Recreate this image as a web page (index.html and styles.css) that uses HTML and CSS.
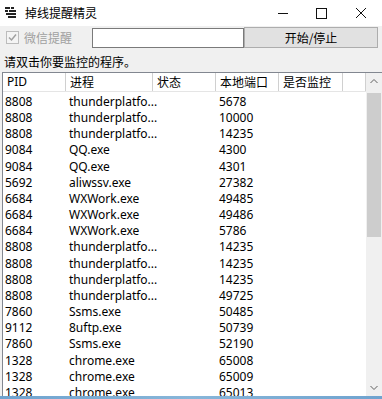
FILE: index.html
```html
<!DOCTYPE html>
<html lang="zh-CN">
<head>
<meta charset="UTF-8">
<title>掉线提醒精灵</title>
<link rel="stylesheet" href="styles.css">
</head>
<body>
<div class="window">
    <div class="titlebar">
        <svg class="app-icon" width="12" height="11" viewBox="0 0 12 11">
            <rect x="0" y="0" width="5" height="2" fill="#222"/>
            <rect x="6" y="0" width="3" height="2" fill="#222"/>
            <rect x="0" y="3" width="3" height="2" fill="#222"/>
            <rect x="4" y="3" width="7" height="2" fill="#222"/>
            <rect x="1" y="6" width="10" height="2" fill="#222"/>
            <rect x="3" y="9" width="8" height="2" fill="#222"/>
        </svg>
        <span class="title">掉线提醒精灵</span>
        <div class="controls">
            <svg width="46" height="26" viewBox="0 0 46 26"><line x1="26" y1="13.5" x2="36" y2="13.5" stroke="#111" stroke-width="1"/></svg>
            <svg width="40" height="26" viewBox="0 0 40 26"><rect x="18.5" y="8.5" width="10" height="10" fill="none" stroke="#111" stroke-width="1"/></svg>
            <svg width="46" height="26" viewBox="0 0 46 26"><path d="M18 8 L28 18 M28 8 L18 18" stroke="#111" stroke-width="1"/></svg>
        </div>
    </div>

    <div class="toolbar">
        <label class="check">
            <span class="box">
                <svg width="9" height="9" viewBox="0 0 9 9"><path d="M1 4.5 L3.5 7 L8 1.5" fill="none" stroke="#a0a0a0" stroke-width="1.5"/></svg>
            </span>
            微信提醒
        </label>
        <div class="textbox"></div>
        <div class="button">开始/停止</div>
    </div>

    <div class="hint">请双击你要监控的程序。</div>

    <div class="listview">
        <div class="list-main">
            <div class="header">
                <div class="col c1">PID</div>
                <div class="col c2">进程</div>
                <div class="col c3">状态</div>
                <div class="col c4">本地端口</div>
                <div class="col c5">是否监控</div>
                <div class="col c6"></div>
            </div>
            <div class="rows">
                <div class="row"><span class="c1">8808</span><span class="c2">thunderplatfo...</span><span class="c3"></span><span class="c4">5678</span></div>
                <div class="row"><span class="c1">8808</span><span class="c2">thunderplatfo...</span><span class="c3"></span><span class="c4">10000</span></div>
                <div class="row"><span class="c1">8808</span><span class="c2">thunderplatfo...</span><span class="c3"></span><span class="c4">14235</span></div>
                <div class="row"><span class="c1">9084</span><span class="c2">QQ.exe</span><span class="c3"></span><span class="c4">4300</span></div>
                <div class="row"><span class="c1">9084</span><span class="c2">QQ.exe</span><span class="c3"></span><span class="c4">4301</span></div>
                <div class="row"><span class="c1">5692</span><span class="c2">aliwssv.exe</span><span class="c3"></span><span class="c4">27382</span></div>
                <div class="row"><span class="c1">6684</span><span class="c2">WXWork.exe</span><span class="c3"></span><span class="c4">49485</span></div>
                <div class="row"><span class="c1">6684</span><span class="c2">WXWork.exe</span><span class="c3"></span><span class="c4">49486</span></div>
                <div class="row"><span class="c1">6684</span><span class="c2">WXWork.exe</span><span class="c3"></span><span class="c4">5786</span></div>
                <div class="row"><span class="c1">8808</span><span class="c2">thunderplatfo...</span><span class="c3"></span><span class="c4">14235</span></div>
                <div class="row"><span class="c1">8808</span><span class="c2">thunderplatfo...</span><span class="c3"></span><span class="c4">14235</span></div>
                <div class="row"><span class="c1">8808</span><span class="c2">thunderplatfo...</span><span class="c3"></span><span class="c4">14235</span></div>
                <div class="row"><span class="c1">8808</span><span class="c2">thunderplatfo...</span><span class="c3"></span><span class="c4">49725</span></div>
                <div class="row"><span class="c1">7860</span><span class="c2">Ssms.exe</span><span class="c3"></span><span class="c4">50485</span></div>
                <div class="row"><span class="c1">9112</span><span class="c2">8uftp.exe</span><span class="c3"></span><span class="c4">50739</span></div>
                <div class="row"><span class="c1">7860</span><span class="c2">Ssms.exe</span><span class="c3"></span><span class="c4">52190</span></div>
                <div class="row"><span class="c1">1328</span><span class="c2">chrome.exe</span><span class="c3"></span><span class="c4">65008</span></div>
                <div class="row"><span class="c1">1328</span><span class="c2">chrome.exe</span><span class="c3"></span><span class="c4">65009</span></div>
                <div class="row"><span class="c1">1328</span><span class="c2">chrome.exe</span><span class="c3"></span><span class="c4">65013</span></div>
            </div>
        </div>
        <div class="scrollbar">
            <svg class="arrow" width="16" height="17" viewBox="0 0 16 17"><path d="M4.5 10 L8 6.5 L11.5 10" fill="none" stroke="#606060" stroke-width="1"/></svg>
            <div class="track"><div class="thumb"></div></div>
            <svg class="arrow" width="16" height="17" viewBox="0 0 16 17"><path d="M4.5 7 L8 10.5 L11.5 7" fill="none" stroke="#606060" stroke-width="1"/></svg>
        </div>
    </div>
</div>
<div class="taskbar"></div>
</body>
</html>
```

FILE: styles.css
```css
body {
    margin: 0;
    width: 382px;
    height: 399px;
    overflow: hidden;
    background-color: #f0f0f0;
    font-family: "Noto Sans", "Noto Sans CJK SC", sans-serif;
    font-size: 12px;
    color: #000;
}

.window {
    height: 396px;
    display: flex;
    flex-direction: column;
    overflow: hidden;
}

.titlebar {
    height: 26px;
    background: #fff;
    display: flex;
    align-items: center;
    flex-shrink: 0;
}

.app-icon {
    margin-left: 5px;
    margin-top: -2px;
}

.title {
    margin-left: 8px;
    font-family: "Noto Sans CJK SC", sans-serif;
    font-size: 12px;
    margin-top: -2px;
}

.controls {
    margin-left: auto;
    display: flex;
    margin-right: -2px;
}

.controls svg {
    display: block;
}

.toolbar {
    display: flex;
    align-items: center;
    height: 21px;
    margin-top: 1px;
    flex-shrink: 0;
}

.check {
    display: flex;
    align-items: center;
    width: 86px;
    padding-left: 6px;
    color: #a0a0a0;
    font-family: "Noto Sans CJK SC", sans-serif;
    font-size: 12px;
}

.box {
    width: 13px;
    height: 13px;
    border: 1px solid #bcbcbc;
    background: #f4f4f4;
    display: flex;
    align-items: center;
    justify-content: center;
    margin-right: 5px;
    box-sizing: border-box;
}

.textbox {
    width: 152px;
    height: 20px;
    background: #fff;
    border: 1px solid #7a7a7a;
    box-sizing: border-box;
}

.button {
    width: 134px;
    height: 21px;
    background: #e1e1e1;
    border: 1px solid #adadad;
    box-sizing: border-box;
    display: flex;
    align-items: center;
    justify-content: center;
    font-family: "Noto Sans CJK SC", sans-serif;
}

.hint {
    margin-top: 6px;
    padding-left: 4px;
    height: 16px;
    line-height: 16px;
    font-family: "Noto Sans CJK SC", sans-serif;
    flex-shrink: 0;
}

.listview {
    margin-top: 2px;
    margin-left: 2px;
    flex: 1;
    display: flex;
    border: 1px solid #828790;
    border-right: none;
    border-bottom: none;
    background: #fff;
    overflow: hidden;
}

.list-main {
    flex: 1;
    overflow: hidden;
}

.header {
    display: flex;
    height: 18px;
    border-bottom: 1px solid #e5e5e5;
}

.header .col {
    box-sizing: border-box;
    padding-left: 4px;
    line-height: 18px;
    border-right: 1px solid #d0d0d0;
    flex-shrink: 0;
}

.c1 { width: 63px; }
.c2 { width: 87px; }
.c3 { width: 63px; }
.c4 { width: 63px; }
.c5 { width: 64px; }
.c6 { width: 23px; }

.header .c2,
.header .c3,
.header .c4,
.header .c5 {
    font-family: "Noto Sans CJK SC", sans-serif;
}

.rows {
    padding-top: 2px;
}

.row {
    display: flex;
    height: 16.17px;
    line-height: 16px;
    white-space: nowrap;
}

.row span {
    display: block;
    box-sizing: border-box;
    padding-left: 2px;
    flex-shrink: 0;
}

.row .c2,
.row .c4 {
    padding-left: 3px;
}

.scrollbar {
    width: 16px;
    display: flex;
    flex-direction: column;
    background: #f0f0f0;
    flex-shrink: 0;
}

.arrow {
    display: block;
    flex-shrink: 0;
}

.track {
    flex: 1;
    padding: 3px 1px 0 1px;
}

.thumb {
    height: 144px;
    background: #cdcdcd;
}

.taskbar {
    height: 3px;
    background: linear-gradient(to right, #6fa3cf, #88b6d9 50%, #6fa3cf);
}
```
